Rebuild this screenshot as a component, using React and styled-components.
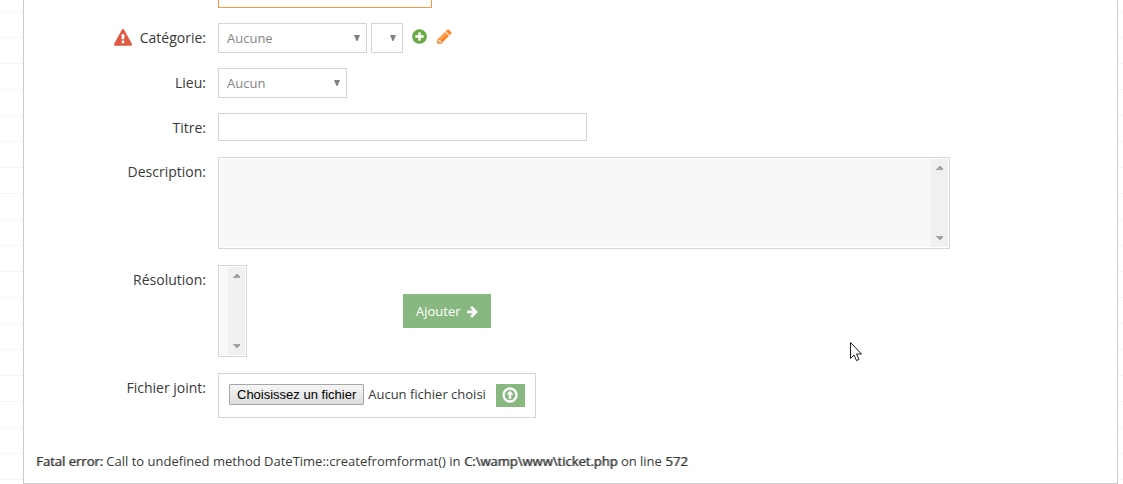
import React, { useRef } from 'react';
import styled, { createGlobalStyle, css } from 'styled-components';

const colors = {
  text: '#393939',
  muted: '#858585',
  border: '#d5d5d5',
  frame: '#cccccc',
  focus: '#f59942',
  green: '#87b87f',
  success: '#69aa46',
  danger: '#dd5a43',
  warning: '#ff892a',
};

const GlobalStyle = createGlobalStyle`
  *, *::before, *::after { box-sizing: border-box; }

  body {
    margin: 0;
    background: repeating-linear-gradient(#fff 0 11px, #f2f7fb 11px 12px, #fff 12px 26px);
    color: ${colors.text};
    font-family: 'Open Sans', sans-serif;
    font-size: 13px;
  }

  button, input, select, textarea { font-family: inherit; font-size: inherit; }
`;

/* ── Layout ── */

const Page = styled.div`
  position: relative;
  padding: 0 5px 0 23px;
`;

const Panel = styled.main`
  padding: 0 12px 11px 0;
  background: #fff;
  border: 1px solid ${colors.frame};
  border-top: 0;
`;

const Form = styled.form`
  display: flex;
  flex-direction: column;
  gap: 15px;
`;

const Row = styled.div`
  display: grid;
  grid-template-columns: 182px minmax(0, 1fr);
  column-gap: 12px;
  align-items: start;
`;

const TallRows = styled.div`
  display: flex;
  flex-direction: column;
  gap: 16px;
  padding-top: 1px;
`;

const Label = styled.label`
  display: flex;
  justify-content: flex-end;
  align-items: center;
  gap: 8px;
  padding-top: 5px;
  font-size: 14px;
  line-height: 20px;
`;

const Controls = styled.div`
  display: flex;
  align-items: ${({ $align }) => $align || 'flex-start'};
  gap: ${({ $gap }) => $gap || '4px'};
`;

/* ── Fields ── */

const TextInput = styled.input`
  width: 100%;
  max-width: 369px;
  height: 28px;
  padding: 4px 8px;
  border: 1px solid ${colors.border};
  border-radius: 0;
  color: ${colors.muted};
  outline: none;
`;

const ClippedInput = styled(TextInput)`
  max-width: 214px;
  height: 8px;
  padding: 0;
  border-color: ${colors.focus};
  border-top: 0;
`;

const SelectBox = styled.div`
  display: grid;
  align-items: center;
  width: ${({ $width }) => $width};

  > * { grid-area: 1 / 1; }

  > svg {
    justify-self: end;
    margin-right: 7px;
    pointer-events: none;
  }
`;

const Select = styled.select`
  appearance: none;
  width: 100%;
  height: 30px;
  padding: 0 8px;
  background: #fff;
  border: 1px solid ${colors.border};
  border-radius: 0;
  color: ${colors.muted};
`;

const EditorFrame = styled.div`
  display: grid;
  grid-template-columns: minmax(0, 1fr) 17px;
  width: 100%;
  max-width: ${({ $width }) => $width};
  height: 92px;
  padding: 1px;
  background: #fff;
  border: 1px solid ${colors.border};
`;

const EditorArea = styled.textarea`
  width: 100%;
  height: 100%;
  padding: 0;
  background: #f7f8fa;
  border: 0;
  resize: none;
  outline: none;
  overflow: hidden;
`;

const ScrollTrack = styled.div`
  display: flex;
  flex-direction: column;
  justify-content: space-between;
  align-items: center;
  padding: 7px 0;
  background: #f0f0f0;
`;

/* ── Buttons ── */

const buttonReset = css`
  display: inline-flex;
  align-items: center;
  justify-content: center;
  border: 0;
  cursor: pointer;
`;

const IconButton = styled.button`
  ${buttonReset}
  padding: 0;
  background: none;
  color: ${({ $color }) => $color};
`;

const IconGroup = styled.div`
  display: flex;
  gap: 8px;
  padding: 5px 0 0 4px;
`;

const AddButton = styled.button`
  ${buttonReset}
  gap: 5px;
  height: 34px;
  padding: 0 12px 0 13px;
  background: ${colors.green};
  color: #fff;
`;

const UploadBox = styled.div`
  display: flex;
  align-items: flex-start;
  padding: 10px;
  border: 1px solid ${colors.border};
`;

const BrowseButton = styled.button`
  height: 21px;
  padding: 0 7px;
  background: linear-gradient(#f6f6f6, #dddddd);
  border: 1px solid #a6a6a6;
  border-radius: 1px;
  color: #000;
  font-family: 'Liberation Sans', Arial, sans-serif;
  line-height: 19px;
  white-space: nowrap;
`;

const FileName = styled.span`
  padding: 0 10px 0 4px;
  line-height: 21px;
  white-space: nowrap;
`;

const UploadButton = styled.button`
  ${buttonReset}
  width: 29px;
  height: 23px;
  padding: 0 0 2px;
  background: ${colors.green};
  color: #fff;
`;

const ErrorLine = styled.p`
  margin: 33px 0 0 12px;
  line-height: 21px;

  b {
    font-weight: 400;
    text-shadow: 1px 0 rgba(57, 57, 57, 0.6);
  }
`;

const Pointer = styled.svg`
  position: absolute;
  top: 342px;
  left: 850px;
  pointer-events: none;
`;

/* ── Icons ── */

const PATHS = {
  warning:
    'M1024 1375v-190q0-14-9.5-23.5t-22.5-9.5h-192q-13 0-22.5 9.5t-9.5 23.5v190q0 14 9.5 23.5t22.5 9.5h192q13 0 22.5-9.5t9.5-23.5zm-2-374l18-459q0-12-10-19-13-11-24-11h-220q-11 0-24 11-10 7-10 21l17 457q0 10 10 16.500t24 6.500h185q14 0 23.500-6.500t10.500-16.500zm-14-934l768 1408q35 63-2 126-17 29-46.500 46t-63.500 17h-1536q-34 0-63.500-17t-46.500-46q-37-63-2-126l768-1408q17-31 47-49t65-18 65 18 47 49z',
  plus:
    'M1344 960v-128q0-26-19-45t-45-19h-256v-256q0-26-19-45t-45-19h-128q-26 0-45 19t-19 45v256h-256q-26 0-45 19t-19 45v128q0 26 19 45t45 19h256v256q0 26 19 45t45 19h128q26 0 45-19t19-45v-256h256q26 0 45-19t19-45zm320-64q0 209-103 385.500t-279.500 279.500-385.500 103-385.500-103-279.500-279.500-103-385.500 103-385.500 279.500-279.500 385.500-103 385.500 103 279.500 279.500 103 385.500z',
  pencil:
    'M491 1536l91-91-235-235-91 91v107h128v128h107zm523-928q0-22-22-22-10 0-17 7l-542 542q-7 7-7 17 0 22 22 22 10 0 17-7l542-542q7-7 7-17zm-54-192l416 416-832 832h-416v-416zm683 96q0 53-37 90l-166 166-416-416 166-165q36-38 90-38 53 0 91 38l235 234q37 39 37 91z',
  arrow:
    'M1600 960q0 54-37 91l-651 651q-39 37-91 37-51 0-90-37l-75-75q-38-38-38-91t38-91l293-293h-704q-52 0-84.500-37.500t-32.500-90.500v-128q0-53 32.500-90.500t84.500-37.500h704l-293-294q-38-36-38-90t38-90l75-75q38-38 90-38 53 0 91 38l651 651q37 35 37 90z',
};

function Icon({ name, size, color = 'currentColor' }) {
  return (
    <svg width={size} height={size} viewBox="0 0 1792 1792" fill={color} aria-hidden="true">
      <path d={PATHS[name]} />
    </svg>
  );
}

function UploadIcon() {
  return (
    <svg width="16" height="16" viewBox="0 0 16 16" fill="none" aria-hidden="true">
      <circle cx="8" cy="8" r="6.500" stroke="currentColor" strokeWidth="2.300" />
      <path d="M8 3.800L11.600 7.600H9.300V11.700H6.700V7.600H4.400Z" fill="currentColor" />
    </svg>
  );
}

function Dropdown({ id, width, label, options }) {
  return (
    <SelectBox $width={width}>
      <Select id={id} aria-label={label}>
        {options.map((o) => <option key={o}>{o}</option>)}
      </Select>
      <svg width="6" height="6" viewBox="0 0 6 6" fill="#808080" aria-hidden="true">
        <path d="M0 0H6L3.500 6H2.500Z" />
      </svg>
    </SelectBox>
  );
}

function Editor({ id, width }) {
  return (
    <EditorFrame $width={width}>
      <EditorArea id={id} />
      <ScrollTrack aria-hidden="true">
        <svg width="7" height="4" viewBox="0 0 7 4" fill="#a3a3a3" shapeRendering="crispEdges"><path d="M0 4V3L3 0H4L7 3V4Z" /></svg>
        <svg width="7" height="4" viewBox="0 0 7 4" fill="#a3a3a3" shapeRendering="crispEdges"><path d="M0 0V1L3 4H4L7 1V0Z" /></svg>
      </ScrollTrack>
    </EditorFrame>
  );
}

export default function App() {
  const fileRef = useRef(null);

  return (
    <>
      <GlobalStyle />
      <Page>
        <Panel>
          <Form onSubmit={(e) => e.preventDefault()}>
            <Row>
              <span />
              <ClippedInput type="text" aria-label="Service" />
            </Row>

            <Row>
              <Label htmlFor="category">
                <Icon name="warning" size={18} color={colors.danger} />
                Catégorie:
              </Label>
              <Controls>
                <Dropdown id="category" width="149px" options={['Aucune']} />
                <Dropdown width="32px" label="Sous-catégorie" options={['']} />
                <IconGroup>
                  <IconButton type="button" $color={colors.success} aria-label="Ajouter une catégorie">
                    <Icon name="plus" size={17} />
                  </IconButton>
                  <IconButton type="button" $color={colors.warning} aria-label="Modifier la catégorie">
                    <Icon name="pencil" size={17} />
                  </IconButton>
                </IconGroup>
              </Controls>
            </Row>

            <Row>
              <Label htmlFor="place">Lieu:</Label>
              <Dropdown id="place" width="129px" options={['Aucun']} />
            </Row>

            <Row>
              <Label htmlFor="title">Titre:</Label>
              <TextInput id="title" type="text" />
            </Row>

            <TallRows>
              <Row>
                <Label htmlFor="description">Description:</Label>
                <Editor id="description" width="732px" />
              </Row>

              <Row>
                <Label htmlFor="resolution">Résolution:</Label>
                <Controls $align="center" $gap="156px">
                  <Editor id="resolution" width="29px" />
                  <AddButton type="button">
                    Ajouter
                    <Icon name="arrow" size={13} />
                  </AddButton>
                </Controls>
              </Row>

              <Row>
                <Label htmlFor="file">Fichier joint:</Label>
                <Controls>
                  <UploadBox>
                    <input id="file" ref={fileRef} type="file" hidden />
                    <BrowseButton type="button" onClick={() => fileRef.current.click()}>
                      Choisissez un fichier
                    </BrowseButton>
                    <FileName>Aucun fichier choisi</FileName>
                    <UploadButton type="submit" aria-label="Envoyer le fichier">
                      <UploadIcon />
                    </UploadButton>
                  </UploadBox>
                </Controls>
              </Row>
            </TallRows>
          </Form>

          <ErrorLine>
            <b>Fatal error:</b> Call to undefined method DateTime::createfromformat() in{' '}
            <b>C:\wamp\www\ticket.php</b> on line <b>572</b>
          </ErrorLine>
        </Panel>

        <Pointer width="12" height="20" viewBox="0 0 12 20" aria-hidden="true">
          <path
            d="M.5.500V16.500L4 13L6.500 18.500L9 17.500L6.500 12H11.500Z"
            fill="#fff"
            stroke="#1a1a2a"
          />
        </Pointer>
      </Page>
    </>
  );
}
